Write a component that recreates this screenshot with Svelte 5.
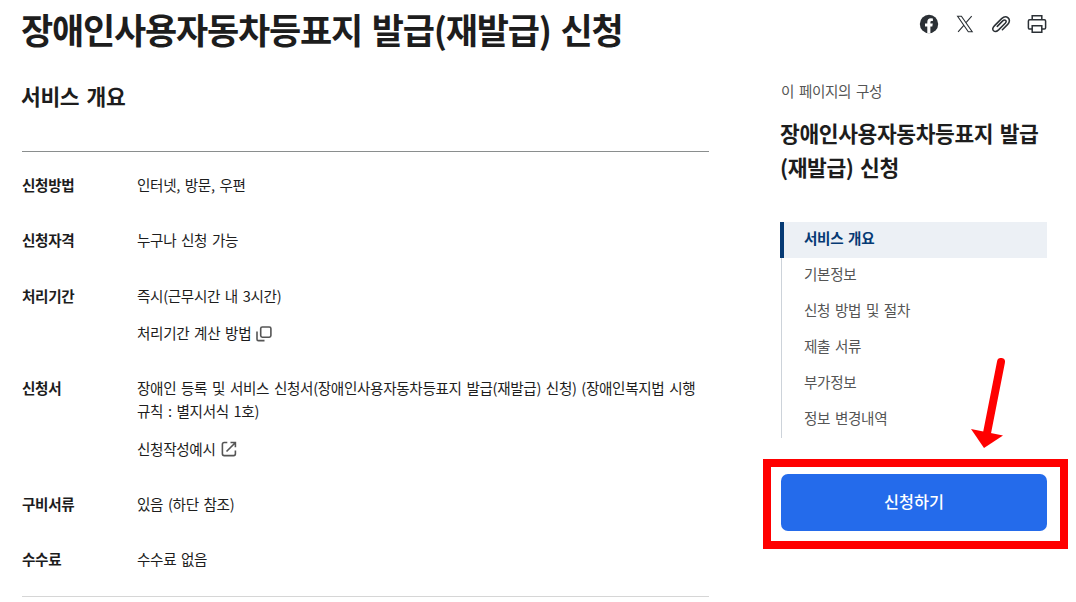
<script>
    const title = "장애인사용자동차등표지 발급(재발급) 신청"

    const rows = [
        { name: "신청방법", lines: ["인터넷, 방문, 우편"] },
        { name: "신청자격", lines: ["누구나 신청 가능"] },
        { name: "처리기간", lines: ["즉시(근무시간 내 3시간)"], link: "처리기간 계산 방법", icon: "popup" },
        {
            name: "신청서",
            lines: ["장애인 등록 및 서비스 신청서(장애인사용자동차등표지 발급(재발급) 신청) (장애인복지법 시행", "규칙 : 별지서식 1호)"],
            link: "신청작성예시",
            icon: "blank"
        },
        { name: "구비서류", lines: ["있음 (하단 참조)"] },
        { name: "수수료", lines: ["수수료 없음"] }
    ]

    const menu = ["서비스 개요", "기본정보", "신청 방법 및 절차", "제출 서류", "부가정보", "정보 변경내역"]
    let current = $state(0)
</script>

<div class="page">
    <main class="content">
        <h1>{title}</h1>
        <h2>서비스 개요</h2>
        <dl class="info">
            {#each rows as row}
                <div class="row">
                    <dt>{row.name}</dt>
                    <dd>
                        <p>{#each row.lines as line}<span class="line">{line}</span>{/each}</p>
                        {#if row.link}
                            <a class="link" href="#top">
                                <span>{row.link}</span>
                                {#if row.icon == "popup"}
                                    <svg class="popup" width="16" height="16" viewBox="0 0 16 16">
                                        <rect x="4.7" y="1" width="10.2" height="10.2" rx="1.6" />
                                        <path d="M1 5.5V13.2Q1 14.6 2.4 14.6H8.5" />
                                    </svg>
                                {:else}
                                    <svg class="blank" width="16" height="16" viewBox="0 0 16 16">
                                        <path d="M6.3 1.5H3.2Q1.4 1.5 1.4 3.3V12.8Q1.4 14.6 3.2 14.6H12.6Q14.4 14.6 14.4 12.8V9.5M5.5 10.5L14 2M9.5 1.5H14.4V6.3" />
                                    </svg>
                                {/if}
                            </a>
                        {/if}
                    </dd>
                </div>
            {/each}
        </dl>
    </main>

    <!-- 우측 영역 -->
    <aside class="side">
        <div class="share">
            <svg width="20" height="20" viewBox="0 0 20 20">
                <circle cx="10" cy="10" r="9.2" fill="#2b3035" />
                <path d="M8.3 19.2V12.5H6V9.6H8.3V8.1Q8.3 4.3 11.9 4.3Q12.9 4.3 13.9 4.5V7H12.6Q11.4 7 11.4 8.2V9.6H13.8L13.3 12.5H11.4V19.2Z" fill="#fff" />
            </svg>
            <svg width="20" height="20" viewBox="0 0 20 20" fill="none" stroke="#2b3035" stroke-width="1.1">
                <path d="M2.6 2.2H6.4L17.2 17.8H13.3ZM16.7 2.2L10.8 8.9M9 11.1L3.1 17.8" />
            </svg>
            <svg width="20" height="20" viewBox="0 0 20 20" fill="none" stroke="#2b3035" stroke-width="1.5" stroke-linecap="round">
                <path d="M11.4 15.7L16.7 10.4Q19.9 6.7 17.1 3.9Q14.2 1.4 10.6 4.6L3.6 11.6Q.5 14.8 2.6 16.8Q4.6 18.7 7.6 15.9L14.2 9.3Q15.9 7.5 14.6 6.4Q13.4 5.3 11.7 6.9L6.3 12.4" />
            </svg>
            <svg width="20" height="20" viewBox="0 0 20 20" fill="none" stroke="#2b3035" stroke-width="1.5">
                <path d="M5.2 5.6V1.7H14.8V5.6M5.2 15H2.7Q1.4 15 1.4 13.7V7.1Q1.4 5.8 2.7 5.8H17.3Q18.6 5.8 18.6 7.1V13.7Q18.6 15 17.3 15H14.8M5.2 11.8H14.8V18.3H5.2Z" />
            </svg>
        </div>
        <p class="caption">이 페이지의 구성</p>
        <h3>{title}</h3>
        <ul class="menu">
            {#each menu as item, i}
                <li><button class:active={current == i} onclick={() => current = i}>{item}</button></li>
            {/each}
        </ul>
        <div class="apply">
            <button class="applyBtn">신청하기</button>
            <!-- 신청 버튼 강조 표시 -->
            <div class="mark"></div>
            <svg class="arrow" width="36" height="94" viewBox="0 0 36 94">
                <path d="M31 8L17 79" stroke="#f00" stroke-width="8" stroke-linecap="round" />
                <path d="M1 75L33 81.5L14 94Z" fill="#f00" />
            </svg>
        </div>
    </aside>
</div>

<style>
:global(body) {
  background-color: #fff;
}
.page {
  width: 1076px;
  height: 602px;
  box-sizing: border-box;
  padding: 0 29px 0 22px;
  display: flex;
  justify-content: space-between;
  overflow: hidden;
  color: #1d1d1d;
  font-family: "Noto Sans CJK KR", sans-serif;
  font-size: 14.6px;
  line-height: 23px;
  letter-spacing: -0.35px;
  word-spacing: 1.9px;
}
h1, h2, h3, p, dl, dd, ul {
  margin: 0;
  padding: 0;
}
.content {
  width: 687px;
}
h1 {
  margin-left: -1px;
  padding-top: 4px;
  font-size: 35px;
  line-height: 50px;
  letter-spacing: -1.2px;
  word-spacing: 3px;
  white-space: nowrap;
}
h2 {
  margin-top: 26px;
  margin-left: -1px;
  font-size: 21.5px;
  line-height: 32px;
  letter-spacing: -0.4px;
  word-spacing: 3px;
}
.info {
  height: 446px;
  margin-top: 39px;
  padding-top: 21px;
  box-sizing: border-box;
  border-top: 1px solid #8a8e8e;
  border-bottom: 1px solid #d6d6d6;
  display: flex;
  flex-direction: column;
  gap: 32.3px;
}
.row {
  display: flex;
}
dt {
  width: 115px;
  font-weight: 700;
}
dd {
  flex: 1;
}
.line {
  display: block;
  white-space: nowrap;
}
.link {
  margin-top: 14.4px;
  display: flex;
  align-items: center;
  gap: 6px;
  color: inherit;
  text-decoration: none;
}
.link svg {
  fill: none;
  stroke: #555;
  stroke-width: 1.6;
}
.link .popup {
  margin-top: 4px;
  margin-left: -1px;
}
.link .blank {
  margin-top: 2px;
}
.side {
  width: 267px;
}
.share {
  height: 47px;
  display: flex;
  justify-content: flex-end;
  align-items: center;
  gap: 16px;
}
.caption {
  margin-top: 32px;
  padding-left: 1px;
  color: #555;
}
h3 {
  margin-top: 14px;
  font-size: 21.5px;
  line-height: 34px;
  letter-spacing: -0.4px;
  word-spacing: 2px;
}
.menu {
  margin-top: 38px;
  list-style: none;
}
.menu li {
  height: 36px;
  margin-left: 1px;
  border-left: 1px solid #cdd3da;
}
.menu button {
  width: 267px;
  height: 36px;
  margin-left: -2px;
  padding: 0 0 5px 20px;
  border: 0;
  border-left: 4px solid transparent;
  background: none;
  color: #555;
  font: inherit;
  letter-spacing: inherit;
  word-spacing: inherit;
  text-align: left;
}
.menu .active {
  border-left-color: #063a74;
  background-color: #ecf0f5;
  color: #063a74;
  font-weight: 700;
}
.apply {
  position: relative;
  margin-top: 36px;
  padding-left: 1px;
}
.applyBtn {
  display: block;
  width: 266px;
  height: 57px;
  padding: 0 0 3px;
  border: 0;
  border-radius: 7px;
  background-color: #246beb;
  color: #fff;
  font: inherit;
  font-size: 16.3px;
  font-weight: 500;
}
.mark {
  position: absolute;
  left: -17px;
  top: -15px;
  width: 305px;
  height: 90px;
  box-sizing: border-box;
  border: 8px solid #f00;
  pointer-events: none;
}
.arrow {
  position: absolute;
  left: 190px;
  top: -120px;
}
</style>
